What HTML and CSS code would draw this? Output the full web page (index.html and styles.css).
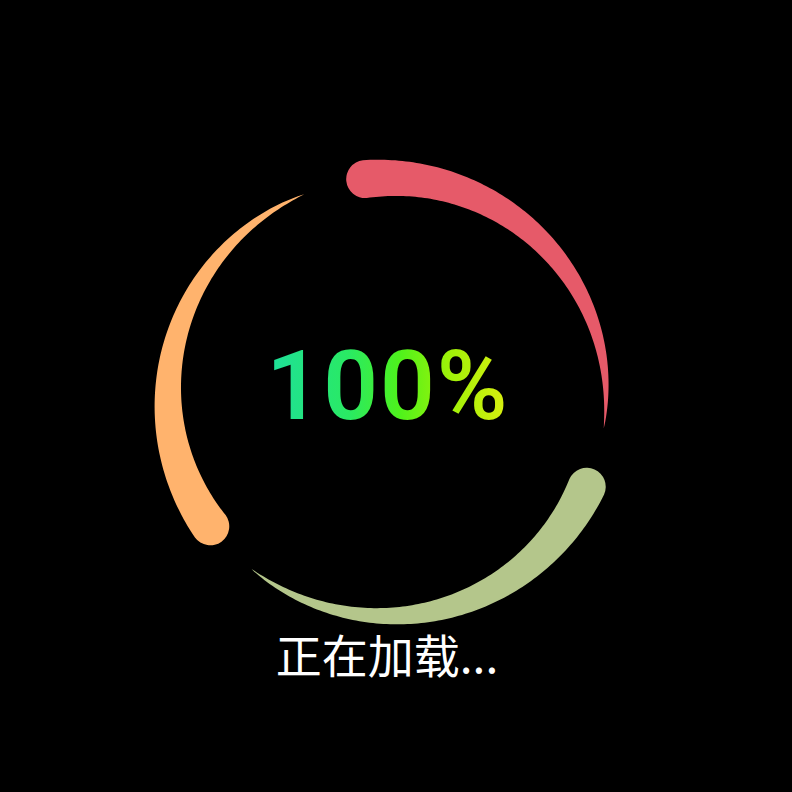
FILE: index.html
```html
<!DOCTYPE html>
<html lang="zh-CN">
<head>
<meta charset="utf-8">
<title>正在加载</title>
<link rel="stylesheet" href="styles.css">
</head>
<body>
<main class="screen">
  <div class="ring">
    <svg class="ring-svg" width="480" height="480" viewBox="0 0 480 480" aria-hidden="true">
      <path class="arc arc-red" data-head="264.2" d=""></path>
      <path class="arc arc-green" data-head="24.2" d=""></path>
      <path class="arc arc-orange" data-head="143.8" d=""></path>
    </svg>
    <div class="percent">100%</div>
  </div>
  <div class="label">正在加载...</div>
</main>
<script src="script.js"></script>
</body>
</html>
```
FILE: styles.css
```css
html, body {
  margin: 0;
  padding: 0;
  background: #000;
}
.screen {
  box-sizing: border-box;
  width: 792px;
  height: 792px;
  padding-right: 18px;
  display: flex;
  flex-direction: column;
  align-items: center;
  background: #000;
}
.ring {
  margin-top: 157px;
  width: 480px;
  height: 480px;
  display: grid;
}
.ring-svg {
  grid-area: 1 / 1;
  display: block;
}
.arc-red { fill: #e65a69; }
.arc-green { fill: #b4c68b; }
.arc-orange { fill: #ffb36d; }
.percent {
  grid-area: 1 / 1;
  place-self: center;
  margin-bottom: 22px;
  padding-left: 2px;
  font-family: Roboto, "Noto Sans", sans-serif;
  font-weight: 600;
  font-size: 96px;
  line-height: 1;
  letter-spacing: 2px;
  background: linear-gradient(90deg, #1ddf9e 0%, #2aea62 35%, #4ef21c 55%, #9ef208 75%, #dcee10 100%);
  -webkit-background-clip: text;
  background-clip: text;
  color: transparent;
}
.label {
  margin-top: -11px;
  font-family: "Noto Sans CJK SC", "Noto Sans", sans-serif;
  font-size: 46px;
  line-height: 55px;
  color: #fff;
}
```
FILE: script.js
```js
(function () {
  var cx = 240, cy = 240, R = 219, T = 38, sweep = 104, N = 120;
  var arcs = document.querySelectorAll('.arc');
  arcs.forEach(function (p) {
    var h = parseFloat(p.getAttribute('data-head'));
    var outer = [], inner = [];
    for (var i = 0; i <= N; i++) {
      var u = i / N;
      var a = (h + u * sweep) * Math.PI / 180;
      var w = (T / 2) * Math.pow(1 - u, 0.85);
      outer.push([cx + (R + w) * Math.cos(a), cy + (R + w) * Math.sin(a)]);
      inner.push([cx + (R - w) * Math.cos(a), cy + (R - w) * Math.sin(a)]);
    }
    var f = function (pt) { return pt[0].toFixed(2) + ' ' + pt[1].toFixed(2); };
    var d = 'M' + f(outer[0]);
    for (var j = 1; j <= N; j++) d += 'L' + f(outer[j]);
    for (var k = N - 1; k >= 0; k--) d += 'L' + f(inner[k]);
    d += 'A' + (T / 2) + ' ' + (T / 2) + ' 0 0 1 ' + f(outer[0]) + 'Z';
    p.setAttribute('d', d);
  });
})();
```
